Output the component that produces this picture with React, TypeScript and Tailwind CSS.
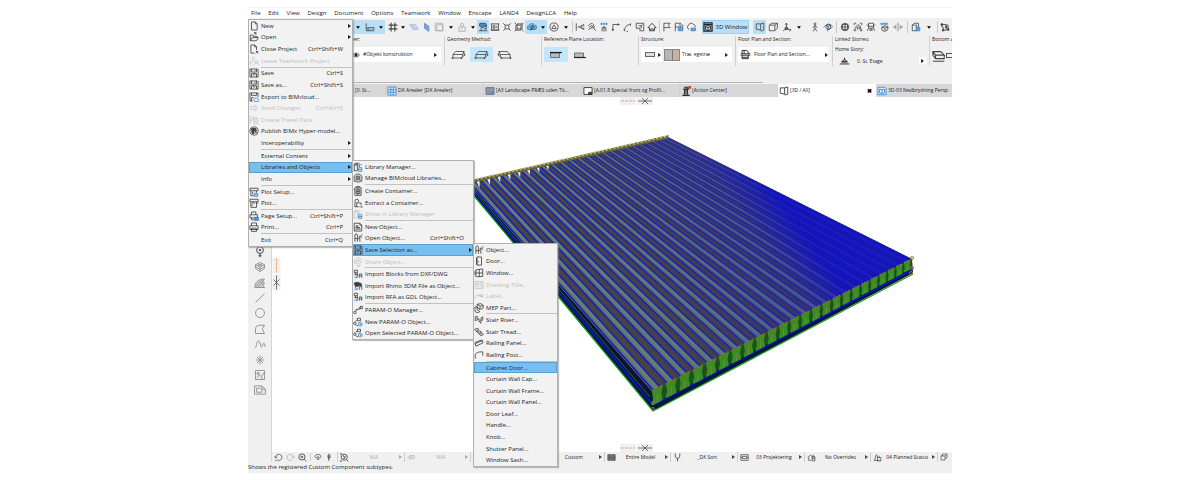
import React from "react";

type P = { className?: string };

/* Icons are drawn on a 16 unit grid. */
const ICONS: Record<string, React.ReactNode> = {
  doc: <path d="M4 1.5h6l3 3v10H4zM10 1.5v3h3" />,
  open: <path d="M2 14V5h4l1 2h6v2M2 14l3-5h10l-3 5zM8 4l3-3M11 4V1H8" />,
  close: <path d="M3 1.5h6l3 3V10M3 1.5v13h6M9 1.5v3h3M11 11l4 4M15 11l-4 4" />,
  team: <path d="M7 2a2 2 0 1 1 0 4 2 2 0 0 1 0-4zM2 14c0-4 2-6 5-6M10 9a2 2 0 1 1 4 0 2 2 0 0 1-4 0M8 15c0-3 2-4 4-4s3 1 3 4M3 10H1" />,
  save: <path d="M1.5 1.5h12l1 1v12h-13zM4 1.5v5h8v-5M4 14.5V9h8v5.500M6 11h4M9.500 3v2" />,
  cloudsave: <><path d="M1.500 1.500h13V8M1.500 1.500v13H6M4 1.500v4h8v-4M4 14V9h3" /><path stroke="#3583c6" d="M8 13a2 2 0 0 1 2-3 2.500 2.500 0 0 1 4 1 2 2 0 0 1 0 4H9z" /></>,
  send: <path d="M1 6h10M1 10h10M9 3l5 5-5 5" />,
  pack: <path d="M2 2v12M2 8h5V3H4M8 6h6v8H8zM10 6V4h2v2M8 10h6" />,
  bimx: <><circle cx="8" cy="8" r="6.500" /><path fill="currentColor" d="M4 4h7v3H8v5H5z" /><path d="M9 12l4-6M9 7l4 5" /></>,
  plotset: <><path d="M1.500 2h13v4h-13zM3 6v8h5M6 8v4M12 6v3" /><path stroke="#3583c6" d="M9 10h5v5H9zM9 12.500h5" /></>,
  plot: <path d="M1.500 2h13v4h-13zM3 6v9h9V6M5 8h5M5 10v3M12 8h3" />,
  pageset: <><path d="M4 6V1.500h7V6M1.500 6h12v5h-12zM4 11v3h4" /><path fill="#4a94d4" stroke="#3583c6" d="M9 10h6v5H9z" /></>,
  print: <path d="M4 6V1.500h8V6M1.500 6h13v6h-13zM4 10h8v5H4z" />,
  lib: <><path d="M2 14V3h5v11M2 5h5M1 14h6M4 2h6M10 3v5M12 4l2 1" /><path stroke="#3583c6" d="M9 9h5v6H9zM9 12h5" /></>,
  cloudlib: <path d="M8 1.500a6.500 6.500 0 1 0 .1 0M5 5h6v6H5zM8 5v6M5 8h6M1 13h3M12 13h3" />,
  crate: <path d="M3 3h10v12H3zM1 6h2M8 3v12M5 6h6v6H5zM5 9h6M5 3V1h6v2" />,
  extract: <><path d="M6 2a3 3 0 0 1 0 6 3 3 0 0 1 0-6M3 8v6h6M6 8v6M9 8h4v3" /><path stroke="#3583c6" d="M10 14h5M13 12l2 2-2 2" /></>,
  newobj: <path d="M2 2h9l3 3v9.500H2zM11 2v3h3M5 13V6h3v7M5 9h6M11 9v4" />,
  chair: <path d="M3 14V3c0-2 4-2 4 0v6h4v5M7 9v5M3 9h4M10 8V5h3v3M13 3h2" />,
  share: <><circle cx="9" cy="6" r="4.500" /><path d="M7 11v4h4v-4M2 4v6h3M7 6h4M9 4v4" /></>,
  blocks: <><path d="M2 2h5v4H2zM7 6v6M2 9h5M10 14V8h4v6M10 11h4M4 6v3" /><path stroke="#3583c6" d="M2 13h5M5 11l2 2-2 2" /></>,
  rhino: <><path fill="currentColor" d="M2 3l5-1 6 2 1 4-4-1-3 2-4-2z" /><path d="M10 14V9h4v5M4 8v3" /><path stroke="#3583c6" d="M2 13h5M5 11l2 2-2 2" /></>,
  param: <path d="M3 10a2 2 0 1 1 0 4 2 2 0 0 1 0-4M5 10V7h5V4h2M12 2h3v4h-3z" />,
  paramset: <><path d="M3 8a2 2 0 1 1 0 4 2 2 0 0 1 0-4M4 7l3-3M7 2h5v4H7zM5 13l3 1" /><circle stroke="#3583c6" cx="11.500" cy="11.500" r="3" /><path stroke="#3583c6" d="M11.500 10v2h2" /></>,
  door: <path d="M5 1.500h7v13H5zM7 8v2M5 14.500l-1-1v-11" />,
  window: <path d="M3 3l11-1.500v12L3 14zM8.500 2v12M3 8h11M1.500 5v6" />,
  title: <path d="M1.500 2.500h13v11h-13zM4 5h3v3H4zM9 5h4M9 8h4M4 11h3M9 11h4" />,
  label: <path d="M1 12l3-5h4M9 9V6h2v3M12 6h2v3h-2zM9 9h5" />,
  mep: <path d="M5 2l6-1 4 3-1 5-5 1-4-3zM5 2l5 3 5-1M10 5l-1 5M1 7l4-1v5l4 2-2 3-5-2z" />,
  riser: <path d="M2 3l3-1v5l3-1v5l3-1v4M5 8l-3 1V3M11 5l3-2v5l-3 1z" />,
  tread: <path d="M1 4l4-2 3 2-4 2zM5 8l4-2 3 2-4 2zM9 12l4-2 2 2-4 2zM4 6v2M8 10v2" />,
  rail: <path d="M2 9l12-5v4L3 13zM2 9V7l11-4" />,
  post: <path d="M2 14V7c3-4 6-4 12-4M14 3v6" />,
  ruler: <><path d="M2 2v12h12V8M2 11l3-2M5 14V9h9" /><path stroke="#3583c6" d="M8 11v2M11 11v2" /></>,
  hash: <path strokeWidth="1.800" d="M5 1v14M11 1v14M1 5h14M1 11h14" />,
  planeL: <path fill="#cbd9ec" stroke="#a7bbd8" d="M1 4l9 0 5 8H6zM4 4l6 8" />,
  planeB: <path fill="#7ba6dc" stroke="#5e8bc9" d="M4 2l7 5v8l-7-5z" />,
  square: <path stroke="#aaa" d="M2 2h12v12H2zM4.500 4.500h9.500v9.500H4.500z" />,
  person: <path stroke="#aaa" d="M8 2a2.500 2.500 0 1 1 0 5 2.500 2.500 0 0 1 0-5M3 8h10v7H3zM8 10v3" />,
  trace: <><path fill="#4389c4" d="M3 2h9l2 4-7 3-5-3z" /><path d="M1 14h14M5 9v5M9 11h5M13 6v5" /></>,
  calendar: <path d="M1 3h14M2.500 3v10h11V3M1 13h14M5 6h3v4H5zM11 6v4" />,
  snap: <path d="M2 2l3 3M14 2l-3 3M2 14l3-3M14 14l-3-3M5 5h6v6H5z" />,
  group: <path d="M3 5h8v8H3zM5 3h8v8H5zM1 1l3 3M15 15l-3-3M15 1l-3 3M1 15l3-3" />,
  cloud: <><path stroke="#2e75ae" fill="#7ab6e4" d="M3 12a3 3 0 0 1 0-6 5 5 0 0 1 9-1 3.500 3.500 0 0 1 0 7z" /><path d="M6 13l3-8 3 4zM4 8h6" /></>,
  tricircle: <><circle cx="8" cy="8" r="6.500" /><path d="M8 4.500l3.500 6h-7z" /></>,
  adjust: <path d="M2 2v12M4 8h3M7 8l7-4M7 8l7 4M14 4v3M14 9v3M10 5l2 6" />,
  split: <path d="M2 6c4-5 8-4 9-1l-3 4-6 3M7 5l7 9M9 10l4-3M3 8l4-1" />,
  intersect: <><path stroke="#3583c6" d="M2 3h12M4 1v4M8 1v4M12 1v4" /><path d="M8 6v9M5 9h6M5 15V9M11 15V9" /></>,
  corner: <path d="M3 15V4h11M11 2v4M1 12h4" />,
  curve: <path d="M2 14C3 8 6 4 12 4M12 2v4M1 11l3 4M6 15h2" />,
  resize: <path d="M2 2h12v12H9M2 2v8M2 10h6v5M6 6h4v4M12 4l-3 3" />,
  house: <path strokeWidth="1.500" d="M1.500 9L8 2l6.500 7H12v5H4V9zM6 14v-3h4v3" />,
  flag: <path d="M3 15V2h10l-3 3.500L13 9H3" />,
  flagB: <><path d="M2 15V2h9l-2 3 2 3H2M11 5h3v4" /><path fill="#5da5e5" stroke="#3583c6" d="M7 9h7v5H7z" /></>,
  cloudB: <><path d="M5 12a4 4 0 0 1-1-7 4.500 4.500 0 0 1 8-1 3 3 0 0 1 2 5" /><path fill="#5da5e5" stroke="#3583c6" d="M8 10h7v4H8z" /></>,
  win3d: <><path d="M1.500 1.500h13v13h-13zM1.500 4h13" strokeWidth="2" /><path d="M4 7l4-2 4 2v5l-4 2-4-2zM4 7l4 2 4-2M8 9v5" /></>,
  persp: <path d="M2 3h7v10l-7-1.500zM9 3l5-1.500V13l-5 1.500" />,
  axo: <path d="M2 5l9 0v9H2zM2 5l4-3h9l-4 3M15 2v8l-4 4" />,
  axis: <path d="M7 2v8l-5 4M7 10l7 3M5 4l2-2 2 2M5 9h4v3H5zM12 11l2 2-2 2" strokeWidth="1.500" />,
  walk: <path d="M8 1.500a1.500 1.500 0 1 1 0 3 1.500 1.500 0 0 1 0-3M8 5v5l-3 5M8 10l3 5M8 6l-4 3M8 6l4 3" />,
  orbit: <><path stroke="#3583c6" d="M1 9c2-5 12-7 14-2-1 4-6 5-8 5M9 10l-3 2 2 3" /><path d="M5 5l4-2 3 2v5l-4 2-3-3zM5 5l3 2 4-2M8 7v5" /></>,
  globe: <><circle cx="8" cy="8" r="6" /><path d="M2 8h12M8 2v12M4 4h8v8H4z" /></>,
  section: <path d="M2 5V2h3M11 2h3v3M14 11v3h-3M5 14H2v-3M4 12l1-5 3-3 4 3v5M7 12V8h3v4" />,
  train: <path d="M4 2h8v8H4zM1 5h3M12 5h3M4 7h8M4 10l-2 4M12 10l2 4M5 13h6M8 10v4" />,
  marq: <><path stroke="#3583c6" d="M2 1v4M5 1v4M8 1v4M11 1v4M1 3h12" /><path d="M3 8l5-2 5 2-1 5-5 2-4-2zM3 8l5 2 5-2M8 10v4" /></>,
  flip: <path stroke="#888" d="M1 8h4M11 8h4M8 1v14M3 6L1 8l2 2M13 6l2 2-2 2M5 4c-1 3-1 5 0 8M11 4c1 3 1 5 0 8" />,
  boxes: <><path d="M2 5l3-3h7v5M2 5h7v9H2z" /><path fill="#5da5e5" stroke="#3583c6" d="M8 8h6v6H8z" /></>,
  nodes: <><path d="M3 4h5l2 3v6H5V8H3zM8 4l5 1v6" /><circle cx="3" cy="4" r="1.500" fill="currentColor" /><circle cx="10" cy="8" r="1.500" fill="currentColor" /><circle cx="5" cy="13" r="1.500" fill="currentColor" /><circle cx="13" cy="12" r="1.500" fill="currentColor" /></>,
  eye: <><path d="M1 8c3-5 11-5 14 0-3 5-11 5-14 0z" /><circle cx="8" cy="8" r="2.500" fill="currentColor" /></>,
  fplan: <path d="M3 7V2h6l3 2v3M1 9h14M1 7h14M3 9v5h9V9M3 12h9M6 2v5" />,
  story: <path d="M1 13h14M5 10a3 3 0 0 1 6 0zM8 7V4M3 10h10" />,
  grid: <path stroke="#3280d2" fill="#e6f2ff" d="M1.500 1.500h13v13h-13zM6 1.500v13M10 1.500v13M1.500 6h13M1.500 10h13" />,
  layout: <path fill="#8797a8" stroke="#61748a" d="M1.500 2.500h13v11h-13zM9 11h5" />,
  layout2: <><path fill="#fff" d="M1.500 2.500h13v11h-13z" /><path fill="#666" d="M9 10h5v3H9z" /></>,
  tower: <><path strokeWidth="1.600" d="M5 15l1-10h4l1 10M3 5h10M5 2h6v3M2 15h12M8 6v9" /><circle cx="14" cy="2" r="2" fill="#e03434" stroke="#e03434" /></>,
  doc3d: <path stroke="#3280d2" fill="#e6f2ff" d="M1.500 2h11l2 2v10h-13zM4 5l4 1v6l-4-1zM8 6l4-1v6l-4 1" />,
  hotspot: <><circle cx="8" cy="5.500" r="4.500" /><circle cx="8" cy="5.500" r="1" fill="currentColor" /><path d="M8 10v5M6 13h4" /></>,
  mesh: <path d="M2 5l6-3 6 3v5l-6 4-6-4zM2 5l6 3 6-3M8 8v6M2 8l6 3 6-3M5 3.500l6 3M11 3.500l-6 3" />,
  fill: <path fill="#ccc" d="M1 14c0-7 6-12 13-11l-3 4 3 1-2 3 2 3zM3 12l8-8M6 13l6-6" />,
  line: <path d="M2 14L14 2" />,
  circle: <circle cx="8" cy="8" r="6" />,
  poly: <path d="M2 14V8c0-4 3-5 6-5h6l-3 5 3 6z" />,
  spline: <path d="M1 13c3 0 2-9 5-9s2 8 4 8 1-5 3-5 1 4 2 5" />,
  star: <path d="M8 2v12M2 8h12M4 4l8 8M12 4l-8 8" />,
  figure: <path d="M2 2h12v12H2zM4 12l3-4 3 2 4-6M4 5h3v2H4zM9 12h3" />,
  drawing: <path d="M0.700 2.500h10l4.500 4.500v6.500H0.700zM3.500 11V5.500h5l2 2V11zM10.500 2.500V7h4.500" />,
  undo: <path d="M3 8a5.500 5.500 0 1 1 2 4M1 6l2 3 3-2M4 14l-2-1" />,
  redo: <path d="M13 8a5.500 5.500 0 1 0-2 4M15 6l-2 3-3-2" />,
  zoomin: <path strokeWidth="1.500" d="M7 1.500a5.500 5.500 0 1 1 0 11 5.500 5.500 0 0 1 0-11M11 11l4 4M7 4.500v5M4.500 7h5" />,
  rotate: <path strokeWidth="1.500" d="M4 10C0 7 3 3 8 3s8 4 4 7M6 8h4v3L8 14l-2-3z" />,
  pan: <path d="M8 1v14M6 4h4v5H6zM5 8h6M7 9v6" />,
  zoomfit: <path strokeWidth="1.500" d="M7.500 2a5.500 5.500 0 1 1 0 11 5.500 5.500 0 0 1 0-11M12 12l3 3M5 6l2-1 1 3 3-2M5 10h4M1 3V1h2M1 13v2h2" />,
  orient: <path d="M2 8l4-4 4 4-4 4zM8 5l4-1 2 4-4 3M4 8h4" />,
  screen: <path fill="#777" d="M1.500 3h13v10h-13zM4 6v4M8 6v4M12 6v4" />,
  fork: <path strokeWidth="1.500" d="M4 1v4c0 6 8 6 8 0V1M8 9v6" />,
  frame: <path d="M1.500 3h13v10h-13zM4 6h8v4H4zM1.500 8H4M12 8h2.500" />,
  house2: <path d="M1 8l5-4 5 3M3 8v5h4M9 7h5v7H9zM9 10h5M11 3v3h3" />,
  stack: <path d="M1 13h10M3 12l3-9 3 5M8 8h6v6H8zM11 8V5" />,
  cube2: <path d="M2 6h8v8H2zM5 6V2h9v8h-4M2 6l3-2M10 6l4-4" />,
  slabTop: <path strokeWidth="1.200" d="M1 3l3 4h10l-4-4zM1 3v4l3 4h10V7M4 7v4M1 14h13" />,
};

function Icon({ name, className = "size-[10px]" }: P & { name: string }) {
  return (
    <svg viewBox="0 0 16 16" className={"shrink-0 " + className} fill="none" stroke="currentColor" strokeWidth="1.300" aria-hidden="true">
      {ICONS[name]}
    </svg>
  );
}

function Right({ className = "h-1 w-[3px]" }: P) {
  return (
    <svg viewBox="0 0 3 4" className={"shrink-0 fill-current " + className} aria-hidden="true">
      <path d="M0 0l3 2-3 2z" />
    </svg>
  );
}

function Down() {
  return (
    <svg viewBox="0 0 5 3" className="h-[3px] w-1 shrink-0 fill-black" aria-hidden="true">
      <path d="M0 0h5L2.500 3z" />
    </svg>
  );
}

/* ---------- menus ---------- */

type Item = { t: string; i?: string; k?: string; sub?: boolean; off?: boolean; on?: boolean } | null;

const FILE_MENU: Item[] = [
  { t: "New", i: "doc", sub: true },
  { t: "Open", i: "open", sub: true },
  { t: "Close Project", i: "close", k: "Ctrl+Shift+W" },
  { t: "Leave Teamwork Project", i: "team", off: true },
  null,
  { t: "Save", i: "save", k: "Ctrl+S" },
  { t: "Save as...", i: "save", k: "Ctrl+Shift+S" },
  { t: "Export to BIMcloud...", i: "cloudsave" },
  { t: "Send Changes", i: "send", k: "Ctrl+Alt+S", off: true },
  { t: "Create Travel Pack", i: "pack", off: true },
  { t: "Publish BIMx Hyper-model...", i: "bimx" },
  { t: "Interoperability", sub: true },
  null,
  { t: "External Content", sub: true },
  { t: "Libraries and Objects", sub: true, on: true },
  { t: "Info", sub: true },
  null,
  { t: "Plot Setup...", i: "plotset" },
  { t: "Plot...", i: "plot" },
  null,
  { t: "Page Setup...", i: "pageset", k: "Ctrl+Shift+P" },
  { t: "Print...", i: "print", k: "Ctrl+P" },
  null,
  { t: "Exit", k: "Ctrl+Q" },
];

const LIBRARY_MENU: Item[] = [
  { t: "Library Manager...", i: "lib" },
  { t: "Manage BIMcloud Libraries...", i: "cloudlib" },
  null,
  { t: "Create Container...", i: "crate" },
  { t: "Extract a Container...", i: "extract" },
  { t: "Show in Library Manager", i: "lib", off: true },
  null,
  { t: "New Object...", i: "newobj" },
  { t: "Open Object...", i: "chair", k: "Ctrl+Shift+O" },
  { t: "Save Selection as...", i: "save", sub: true, on: true },
  { t: "Share Object...", i: "share", off: true },
  null,
  { t: "Import Blocks from DXF/DWG", i: "blocks" },
  { t: "Import Rhino 3DM File as Object...", i: "rhino" },
  { t: "Import RFA as GDL Object...", i: "blocks" },
  null,
  { t: "PARAM-O Manager...", i: "param" },
  { t: "New PARAM-O Object...", i: "paramset" },
  { t: "Open Selected PARAM-O Object...", i: "paramset" },
];

const SAVE_MENU: Item[] = [
  { t: "Object...", i: "chair" },
  { t: "Door...", i: "door" },
  { t: "Window...", i: "window" },
  { t: "Drawing Title...", i: "title", off: true },
  { t: "Label...", i: "label", off: true },
  { t: "MEP Part...", i: "mep" },
  null,
  { t: "Stair Riser...", i: "riser" },
  { t: "Stair Tread...", i: "tread" },
  { t: "Railing Panel...", i: "rail" },
  { t: "Railing Post...", i: "post" },
  null,
  { t: "Cabinet Door...", on: true },
  { t: "Curtain Wall Cap..." },
  { t: "Curtain Wall Frame..." },
  { t: "Curtain Wall Panel..." },
  { t: "Door Leaf..." },
  { t: "Handle..." },
  { t: "Knob..." },
  { t: "Shutter Panel..." },
  { t: "Window Sash..." },
];

function Menu({ items, label, className }: { items: Item[]; label: string; className: string }) {
  return (
    <div role="menu" aria-label={label} className={"absolute flex flex-col border border-[#b0b0b0] bg-[#f2f2f2] shadow-[1px_1px_1px_#8888] " + className}>
      {items.map((it, n) =>
        it ? (
          <button
            key={n}
            role="menuitem"
            disabled={it.off}
            className={
              "flex min-h-0 flex-1 items-center whitespace-nowrap text-left leading-none " +
              (it.off ? "text-[#bdbdbd]" : "text-[#1c1c1c]") +
              (it.on ? " bg-[#78bff0] outline outline-[#5b9fce] -outline-offset-1" : "")
            }
          >
            <span className="flex w-3 shrink-0 text-[#3c3c3c] in-disabled:text-[#c4c4c4]">{it.i && <Icon name={it.i} />}</span>
            <span className="flex-1">{it.t}</span>
            <span>{it.k}</span>
            <span className="flex w-[9px] justify-center pl-1">{it.sub && <Right />}</span>
          </button>
        ) : (
          <div key={n} role="separator" className="ml-3 h-px shrink-0 bg-[#c2c2c2]" />
        )
      )}
    </div>
  );
}

/* ---------- toolbar ---------- */

type Tool = { w: string; i?: string; caret?: boolean; hl?: boolean; sep?: boolean };
const C12 = "w-3";
const TOOLS: Tool[] = [
  { w: "w-[10px]", caret: true, hl: true },
  { w: "w-[14px]", i: "ruler", hl: true },
  { w: "w-2", caret: true, hl: true },
  { w: "w-4", i: "hash" },
  { w: "w-1", caret: true },
  { w: "w-[18px]", i: "planeL" },
  { w: "w-2", i: "planeB" },
  { w: "w-4", i: "square" },
  { w: "w-2", caret: true },
  { w: "w-[14px]", i: "person" },
  { w: "w-2", caret: true },
  { w: C12, i: "trace", hl: true },
  { w: C12, i: "calendar" },
  { w: C12, i: "snap" },
  { w: C12, i: "group" },
  { w: "w-[13px]", i: "cloud", hl: true },
  { w: "w-[9px]", caret: true, hl: true },
  { w: "w-[14px]", i: "tricircle" },
  { w: "w-[9px]", caret: true },
  { w: "w-1", sep: true },
  { w: C12, i: "adjust" },
  { w: C12, i: "split" },
  { w: C12, i: "intersect" },
  { w: C12, i: "corner" },
  { w: C12, i: "curve" },
  { w: C12, i: "resize" },
  { w: C12, i: "house" },
  { w: "w-[3px]", sep: true },
  { w: C12, i: "flag" },
  { w: C12, i: "flagB" },
  { w: C12, i: "cloudB" },
  { w: "w-[5px]" },
];
const TOOLS_END: Tool[] = [
  { w: "w-1" },
  { w: "w-[13px]", i: "persp", hl: true },
  { w: "w-[14px]", i: "axo" },
  { w: "w-[14px]", i: "axis" },
  { w: "w-[10px]", caret: true },
  { w: "w-1" },
  { w: "w-[13px]", i: "walk" },
  { w: "w-[13px]", i: "orbit" },
  { w: "w-1", sep: true },
  { w: "w-[13px]", i: "globe" },
  { w: "w-[13px]", i: "section" },
  { w: "w-[14px]", i: "train" },
  { w: "w-[13px]", i: "marq" },
  { w: "w-[14px]", i: "flip" },
  { w: "w-[5px]", sep: true },
  { w: "w-3", i: "boxes" },
  { w: "w-[14px]", caret: true },
  { w: "w-[3px]", sep: true },
  { w: "w-3", i: "nodes" },
];

function Tools({ list }: { list: Tool[] }) {
  return (
    <>
      {list.map((t, n) =>
        t.i || t.caret ? (
          <button
            key={n}
            aria-label={t.i ?? "More"}
            className={"flex h-[14px] shrink-0 items-center justify-center overflow-visible " + t.w + (t.hl ? " bg-[#b9dff7]" : "")}
          >
            {t.i ? <Icon name={t.i} className="size-[10px]" /> : <Down />}
          </button>
        ) : (
          <span key={n} className={"flex h-3 shrink-0 justify-center " + t.w}>
            {t.sep && <span className="w-px bg-[#c9c9c9]" />}
          </span>
        )
      )}
    </>
  );
}

function Panel({ title, children }: { title: string; children: React.ReactNode }) {
  return (
    <section className="flex h-[30px] w-[97px] shrink-0 flex-col overflow-hidden whitespace-nowrap border-l border-[#d0d0d0] pr-[3px] pl-[2px]">
      <h2 className="h-[11px] leading-[7px]">{title}</h2>
      {children}
    </section>
  );
}

function SlabIcon({ className = "" }: P) {
  return (
    <svg viewBox="0 0 30 20" className={"h-[10px] w-[15px] " + className} fill="none" stroke="#444" strokeWidth="1.600" aria-hidden="true">
      <path d="M4 9l5-6h17l-3 6zM4 9v5M23 9v5M26 3v5M2 16h19l6-6M4 14l-2 2" />
      <path d="M3 16h.1M21 16h.1M27 9h.1" strokeWidth="3.500" strokeLinecap="round" />
    </svg>
  );
}

/* ---------- drawing of the slatted panel ---------- */

type Pt = [number, number];
const A: Pt = [469, 183];
const B: Pt = [668, 137];
const C: Pt = [912, 259];
const D: Pt = [652, 391];
const N = 24;
const ease = (u: number) => 1.3 * u - 0.3 * u * u;
const mix = (p: Pt, q: Pt, u: number): Pt => [p[0] + (q[0] - p[0]) * ease(u), p[1] + (q[1] - p[1]) * ease(u)];
const pts = (...p: Pt[]) => p.map((q) => q[0].toFixed(1) + "," + q[1].toFixed(1)).join(" ");
const down = (p: Pt, d: number): Pt => [p[0], p[1] + d];

function Slat({ u, color, width }: { u: number; color: string; width: number }) {
  const p = mix(A, B, u);
  const q = mix(D, C, u);
  return <line x1={p[0]} y1={p[1]} x2={q[0]} y2={q[1]} stroke={color} strokeWidth={width} />;
}

function Model() {
  const slats = Array.from({ length: N }, (_, n) => n);
  return (
    <svg viewBox="469 130 448 284" className="absolute top-[33px] left-[197px] h-[284px] w-[448px]" role="img" aria-label="3D model">
      <defs>
        <linearGradient id="depth" gradientUnits="userSpaceOnUse" x1="560" y1="330" x2="764" y2="180">
          <stop offset="0" stopColor="#1018b0" stopOpacity="0" />
          <stop offset="0.450" stopColor="#1018b0" stopOpacity="0.120" />
          <stop offset="0.850" stopColor="#1414b8" stopOpacity="0.400" />
          <stop offset="1" stopColor="#0d0dc8" stopOpacity="0.850" />
        </linearGradient>
      </defs>
      <polygon points={pts(A, D, C, [913, 273], [653, 411], [558, 297], [469, 190])} fill="#08133c" />
      <polygon points={pts(D, C, [912, 268], [653, 404])} fill="#244f1c" />
      <polyline points="469,190 558,296 653,411 913,274" fill="none" stroke="#10a018" strokeWidth="1.200" />
      <polyline points="469,187 558,291 653,405 912,270" fill="none" stroke="#1414d0" strokeWidth="1.500" />
      <polyline points="469,185 558,288 650,397" fill="none" stroke="#18881c" strokeWidth="0.800" />
      <polygon points={pts(A, B, C, D)} fill="#454246" />
      {slats.map((n) => {
        const a = (n + 0.1) / N;
        const b = (n + 0.55) / N;
        const w = 1.3 - (0.7 * n) / N;
        return (
          <g key={n}>
            <polygon points={pts(mix(A, B, a), mix(A, B, b), mix(D, C, b), mix(D, C, a))} fill="#68846e" />
            <Slat u={a} color="#1616cc" width={w} />
            <Slat u={b} color="#1616cc" width={w} />
            <Slat u={(n + 0.22) / N} color="#4d6266" width={0.7} />
            <Slat u={(n + 0.8) / N} color="#5a524c" width={0.7} />
          </g>
        );
      })}
      <polygon points={pts(A, B, C, D)} fill="url(#depth)" />
      {slats.map((n) => {
        const t = mix(A, B, (n + 0.8) / N);
        const s = 1 - n / N;
        return <polygon key={n} points={pts([t[0] - 2, t[1] - 1], [t[0] + 2, t[1] - 2], [t[0] + 1 + s, t[1] + 7 * s])} fill={n < 8 ? "#e4ece4" : "#26427c"} />;
      })}
      <line x1={A[0]} y1={A[1] - 1} x2={B[0]} y2={B[1]} stroke="#6b652d" strokeWidth="3" />
      <line x1={A[0]} y1={A[1] - 2} x2={B[0]} y2={B[1] - 1} stroke="#bdb87c" strokeWidth="2" strokeDasharray="2 2" />
      {slats.map((n) => {
        const p = mix(D, C, (n + 0.02) / N);
        const q = mix(D, C, (n + 0.74) / N);
        const h = 14 - (5 * n) / N;
        const w = q[0] - p[0];
        return (
          <g key={n}>
            <polygon
              points={pts(p, q, [q[0] - w * 0.15, q[1] + h * 0.5], down(q, h), down(p, h), [p[0] + w * 0.15, p[1] + h * 0.5])}
              fill="#3f8a24"
              stroke="#18b018"
              strokeWidth="0.800"
            />
            <path d={"M" + pts(p) + "L" + pts(q)} stroke="#77702f" strokeWidth="2" strokeDasharray="2 1" />
            <path d={"M" + pts([p[0] + w * 0.5, p[1] + 3]) + "v" + (h - 5)} stroke="#708a38" strokeWidth="1" />
          </g>
        );
      })}
      <g fill="none" stroke="#8a7a34" strokeWidth="1">
        <circle cx="653" cy="409" r="1.500" />
        <circle cx="653" cy="403" r="1.500" />
        <circle cx="912" cy="258" r="1.500" />
        <circle cx="912" cy="268" r="1.500" />
        <circle cx="911" cy="273" r="1.500" />
      </g>
    </svg>
  );
}

function Markers({ className }: P) {
  return (
    <div className={"absolute flex gap-px " + className}>
      <svg viewBox="0 0 16 8" className="h-2 w-4 bg-[#f0f0f0]" aria-hidden="true">
        <path d="M1 4h14" stroke="#eda878" strokeDasharray="3 1" />
      </svg>
      <svg viewBox="0 0 16 8" className="h-2 w-4 bg-[#f0f0f0]" fill="none" stroke="#555" aria-hidden="true">
        <path d="M1 4h14M5 1l6 6M11 1L5 7" strokeWidth="0.800" />
      </svg>
    </div>
  );
}

const MENUBAR = ["File", "Edit", "View", "Design", "Document", "Options", "Teamwork", "Window", "Enscape", "LAND4", "DesignLCA", "Help"];

const TABS: { t: string; i?: string; on?: boolean }[] = [
  { t: "[0. St..." },
  { t: "DK Arealer [DK Arealer]", i: "grid" },
  { t: "[A3 Landscape PRÆS uden Tit...", i: "layout" },
  { t: "[A.01.8 Special front og Profil...", i: "layout2" },
  { t: "[Action Center]", i: "tower" },
  { t: "[3D / All]", i: "persp", on: true },
  { t: "3D-03 Nedbrydning Persp", i: "doc3d" },
];

const SIDE = ["hotspot", "mesh", "fill", "line", "circle", "poly", "spline", "star", "figure", "drawing"];

const QUICK: { t: string; i: string; off?: boolean }[] = [
  { t: "N/A", i: "zoomfit", off: true },
  { t: "N/A", i: "orient", off: true },
  { t: "", i: "frame" },
  { t: "", i: "frame" },
  { t: "Custom", i: "stack" },
  { t: "Entire Model", i: "screen" },
  { t: "_DK Sort", i: "fork" },
  { t: "03 Projektering", i: "frame" },
  { t: "No Overrides", i: "house2" },
  { t: "04 Planned Status", i: "stack" },
];

export default function App() {
  const quick = QUICK.filter((_, n) => n !== 3);
  return (
    <div className="bg-white pt-[7px] font-['Open_Sans','Noto_Sans',sans-serif] text-[6px] text-[#222]">
      <div className="relative mx-auto flex w-full max-w-[704px] flex-col overflow-hidden border-t border-[#f3f3f3]">
        <nav className="flex h-[10px] w-[329px] items-center justify-between pl-[3px] leading-none">
          {MENUBAR.map((m) => (
            <button key={m}>{m}</button>
          ))}
        </nav>

        <header className="overflow-hidden bg-[#f0f0f0] text-[5px]">
          <div className="flex h-[18px] items-center pl-[105px] text-[#444]">
            <Tools list={TOOLS} />
            <button className="flex h-[14px] w-[47px] shrink-0 items-center justify-center gap-[2px] whitespace-nowrap border border-[#9fd0ef] bg-[#b9dff7] text-[6px] leading-none text-[#222]">
              <Icon name="win3d" />
              3D Window
            </button>
            <Tools list={TOOLS_END} />
          </div>

          <div className="flex h-[46px] overflow-hidden">
            <section className="w-[196px] shrink-0 pr-[3px] pl-[98px]">
              <h2 className="h-[11px] leading-[7px]">Layer:</h2>
              <button className="flex h-[15px] w-full items-center gap-[3px] bg-white pr-1 pl-[6px] leading-none">
                <Icon name="eye" className="size-2" />
                <span className="flex-1 text-left">#Objekt konstruktion</span>
                <Right />
              </button>
            </section>
            <Panel title="Geometry Method:">
              <div className="flex">
                <button aria-label="Single plane" className="flex h-[15px] w-[23px] items-center justify-center"><SlabIcon /></button>
                <button aria-label="Multi plane" className="flex h-[15px] w-[23px] items-center justify-center bg-[#c5e5fa]"><SlabIcon /></button>
                <button aria-label="Rotated" className="flex h-[15px] w-[23px] items-center justify-center"><SlabIcon className="-scale-x-100" /></button>
              </div>
            </Panel>
            <Panel title="Reference Plane Location:">
              <div className="flex">
                {["Top", "Bottom"].map((s) => (
                  <button key={s} aria-label={s} className={"flex h-[15px] w-6 items-center justify-center " + (s === "Top" ? "bg-[#c5e5fa]" : "")}>
                    <svg viewBox="0 0 14 8" className="h-2 w-[14px]" aria-hidden="true">
                      <path d="M1.500 2h9v4.500h-9z" fill="#bbb" stroke="#555" strokeWidth="0.800" />
                      <path d={s === "Top" ? "M1 1.500h12" : "M1 6.500h12"} stroke="#222" strokeWidth="1.200" />
                    </svg>
                  </button>
                ))}
              </div>
            </Panel>
            <Panel title="Structure:">
              <div className="flex h-[15px] items-center gap-[2px] leading-none">
                <button aria-label="Fill" className="flex h-full w-[21px] items-center justify-between bg-white pr-px pl-1">
                  <span className="h-[5px] w-[10px] border border-[#666] bg-[#ddd]" />
                  <Right />
                </button>
                <button className="flex h-full flex-1 items-center gap-[2px] bg-white pr-1">
                  <span className="flex h-3 w-4 shrink-0 border border-[#888]">
                    <span className="flex-1 border-r border-[#777] bg-[#b5b5b5]" />
                    <span className="flex-1 bg-[#c8b49b]" />
                  </span>
                  <span className="flex-1 text-left">Træ, egetræ</span>
                  <Right />
                </button>
              </div>
            </Panel>
            <Panel title="Floor Plan and Section:">
              <button className="flex h-[15px] items-center gap-[3px] bg-white pr-px pl-[2px] leading-none">
                <Icon name="fplan" className="size-[11px]" />
                <span className="flex-1 text-left">Floor Plan and Section...</span>
                <Right />
              </button>
            </Panel>
            <Panel title="Linked Stories:">
              <div className="flex flex-col gap-[2px] leading-[8px]">
                <span>Home Story:</span>
                <button className="flex items-center pl-1">
                  <Icon name="story" className="mr-[7px] size-[11px]" />
                  <span className="flex-1 text-left">0. St. Etage</span>
                  <span className="flex h-[7px] w-[7px] items-center justify-center bg-white"><Right /></span>
                </button>
              </div>
            </Panel>
            <Panel title="Bottom an">
              <div className="flex h-[17px] items-center text-[#444]">
                <Icon name="slabTop" className="size-[14px]" />
                <span className="h-[5px] w-[9px] border border-[#555]" />
              </div>
            </Panel>
          </div>
          <div className="mr-[189px] h-px bg-[#b5b5b5]" />
          <div className="h-px" />

          <div role="tablist" className="flex h-[13px] bg-[#d8d8d8] pl-10 leading-none">
            {TABS.map((t) => (
              <button
                key={t.t}
                role="tab"
                aria-selected={!!t.on}
                className={"flex w-[98px] shrink-0 items-center gap-px overflow-hidden whitespace-nowrap pl-px " + (t.on ? "bg-white" : "border-r border-[#cfcfcf]")}
              >
                {t.i ? <Icon name={t.i} /> : <span className="w-[65px]" />}
                <span className="flex-1 text-left">{t.t}</span>
                {t.on && <span className="pr-1 text-[6px] font-bold text-black">✖</span>}
              </button>
            ))}
          </div>
        </header>

        <div className="flex">
          <aside className="flex w-6 shrink-0 flex-col items-center border-r border-[#d5d5d5] bg-[#f0f0f0] pt-[147px] text-[#949494]">
            <div className="flex h-[154px] flex-col">
              {SIDE.map((s, n) => (
                <button key={s} aria-label={s} className={"flex flex-1 items-center " + (n === 0 ? "text-[#444]" : "")}>
                  <Icon name={s} className="size-3" />
                </button>
              ))}
            </div>
          </aside>
          <div className="flex min-w-0 flex-1 flex-col">
            <main className="relative h-[355px] bg-white">
              <Model />
              <Markers className="top-0 left-[348px]" />
              <Markers className="bottom-0 left-[348px]" />
              <Markers className="top-[173px] left-[-12px] rotate-90" />
            </main>
            <footer className="flex h-[10px] bg-[#f0f0f0] leading-none text-[#444]">
              <div className="flex w-[65px] shrink-0 items-center gap-[3px] pl-[2px]">
                <Icon name="undo" className="size-[9px]" />
                <Icon name="redo" className="size-[9px] text-[#aaa]" />
                <Icon name="zoomin" className="size-[9px]" />
                <span className="h-2 w-px bg-[#d0d0d0]" />
                <Icon name="rotate" className="size-2" />
                <Icon name="pan" className="size-2" />
              </div>
              {quick.map((q, n) => (
                <button key={n} className="flex min-w-0 flex-1 items-center whitespace-nowrap border-l border-[#cfcfcf] pr-[2px] pl-[2px] text-[5px]">
                  <Icon name={q.i} className={n === 1 ? "size-[9px] text-[#aaa]" : "size-[9px]"} />
                  <span className={"flex-1 text-center " + (q.off ? "text-[#aaa]" : "text-[#222]")}>{q.t}</span>
                  <Right className={q.off ? "h-1 w-[3px] text-[#aaa]" : "h-1 w-[3px]"} />
                </button>
              ))}
              <button aria-label="Windows" className="flex w-[15px] shrink-0 items-center border-l border-[#cfcfcf] pl-[2px]">
                <Icon name="cube2" className="size-2" />
              </button>
            </footer>
          </div>
        </div>
        <div className="h-[11px] bg-[#f0f0f0] leading-[11px]">Shows the registered Custom Component subtypes.</div>

        <Menu items={FILE_MENU} label="File" className="top-[11px] left-0 h-[228px] w-[105px]" />
        <Menu items={LIBRARY_MENU} label="Libraries and Objects" className="top-[152px] left-[104px] h-[180px] w-[122px]" />
        <Menu items={SAVE_MENU} label="Save Selection as" className="top-[235px] left-[225px] h-[224px] w-[85px]" />
      </div>
    </div>
  );
}
